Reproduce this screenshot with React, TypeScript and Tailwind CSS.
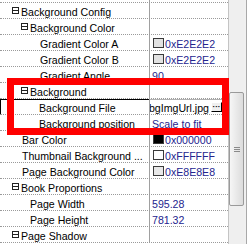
import React from "react";

type Row = {
  label: string;
  pl: number;
  box?: boolean;
  swatch?: string;
  value?: string;
  file?: boolean;
};

const rows: Row[] = [
  { label: "Background Config", pl: 12, box: true },
  { label: "Background Color", pl: 21, box: true },
  { label: "Gradient Color A", pl: 40, swatch: "#E2E2E2", value: "0xE2E2E2" },
  { label: "Gradient Color B", pl: 40, swatch: "#E2E2E2", value: "0xE2E2E2" },
  { label: "Gradient Angle", pl: 40, value: "90" },
  { label: "Background", pl: 21, box: true },
  { label: "Background File", pl: 39, file: true },
  { label: "Background position", pl: 39, value: "Scale to fit" },
  { label: "Bar Color", pl: 22, swatch: "#000000", value: "0x000000" },
  { label: "Thumbnail Background ...", pl: 22, swatch: "#FFFFFF", value: "0xFFFFFF" },
  { label: "Page Background Color", pl: 22, swatch: "#E8E8E8", value: "0xE8E8E8" },
  { label: "Book Proportions", pl: 12, box: true },
  { label: "Page Width", pl: 30, value: "595.28" },
  { label: "Page Height", pl: 30, value: "781.32" },
  { label: "Page Shadow", pl: 12, box: true },
];

function MinusBox() {
  return (
    <svg width="7" height="7" viewBox="0 0 7 7" className="shrink-0 mr-[2px]">
      <rect x="0.5" y="0.5" width="6" height="6" fill="#ffffff" stroke="#222222" strokeWidth="1" />
      <line x1="1" y1="3.5" x2="6" y2="3.5" stroke="#222222" strokeWidth="1" />
    </svg>
  );
}

export default function App() {
  return (
    <div
      className="relative w-[250px] h-[244px] overflow-hidden bg-white flex text-[10.6px] leading-[15px] text-black"
      style={{ fontFamily: '"Liberation Sans", Arial, sans-serif' }}
    >
      {/* grid */}
      <div className="w-[229px] h-full border-r border-[#c4c4c4] flex flex-col">
        <div className="h-[3px] shrink-0 flex border-b border-dotted border-[#9a9a9a]">
          <div className="w-[149px]" />
          <div className="flex-1 border-l border-[#a0a0a0]" />
        </div>
        {rows.map((r) => (
          <div key={r.label} className="h-[16px] shrink-0 flex border-b border-dotted border-[#9a9a9a]">
            <div
              className={
                "w-[149px] h-[15px] flex items-center overflow-hidden whitespace-nowrap " +
                (r.file ? "shadow-[inset_1px_1px_0_#000000]" : "")
              }
              style={{ paddingLeft: r.pl }}
            >
              {r.box && <MinusBox />}
              <span className="pt-[3px]">{r.label}</span>
            </div>
            <div className="flex-1 h-[15px] border-l border-[#a0a0a0] flex items-center overflow-hidden whitespace-nowrap text-[#24248e]">
              {r.swatch && (
                <>
                  <div
                    className="ml-[3px] w-[11px] h-[10px] border border-[#3a3a3a] shrink-0"
                    style={{ backgroundColor: r.swatch }}
                  />
                  <span className="ml-[1px] pt-[3px]">{r.value}</span>
                </>
              )}
              {!r.swatch && r.value && <span className="ml-[2px] pt-[3px]">{r.value}</span>}
              {r.file && (
                <div className="flex-1 h-full flex items-center bg-white border-t border-[#b0b0b0] text-black">
                  <div className="w-[60px] flex-1 overflow-hidden flex justify-end pr-[2px]">
                    <span className="pt-[2px]">bgImgUrl.jpg</span>
                  </div>
                  <div className="w-[11px] h-[10px] mr-[6px] bg-[#f0f0f0] border-r border-b border-black border-t border-l border-t-white border-l-white flex items-center justify-center text-[8px] leading-[8px] font-bold">
                    ···
                  </div>
                </div>
              )}
            </div>
          </div>
        ))}
      </div>
      {/* scrollbar */}
      <div className="relative w-[15px] h-full bg-[#efefef]">
        <div className="absolute left-0 top-[92px] w-[15px] h-[114px] rounded-[2px] border border-[#9a9a9a] bg-gradient-to-r from-[#f6f6f6] to-[#dcdcdc] flex flex-col items-center justify-center gap-[1px]">
          <div className="w-[6px] h-[1px] bg-[#8a8a8a]" />
          <div className="w-[6px] h-[1px] bg-[#8a8a8a]" />
          <div className="w-[6px] h-[1px] bg-[#8a8a8a]" />
        </div>
      </div>
      <div className="w-[6px] h-full bg-[#f0f0f0] flex">
        <div className="w-[2px] h-full bg-[#f0f0f0]" />
        <div className="w-[1px] h-full bg-[#a8a8a8]" />
        <div className="flex-1 h-full bg-white" />
      </div>

      {/* red highlight frame */}
      <div className="absolute left-[7px] top-[78px] w-[222px] h-[57px] border-[7px] border-[#ff0000]" />
    </div>
  );
}
